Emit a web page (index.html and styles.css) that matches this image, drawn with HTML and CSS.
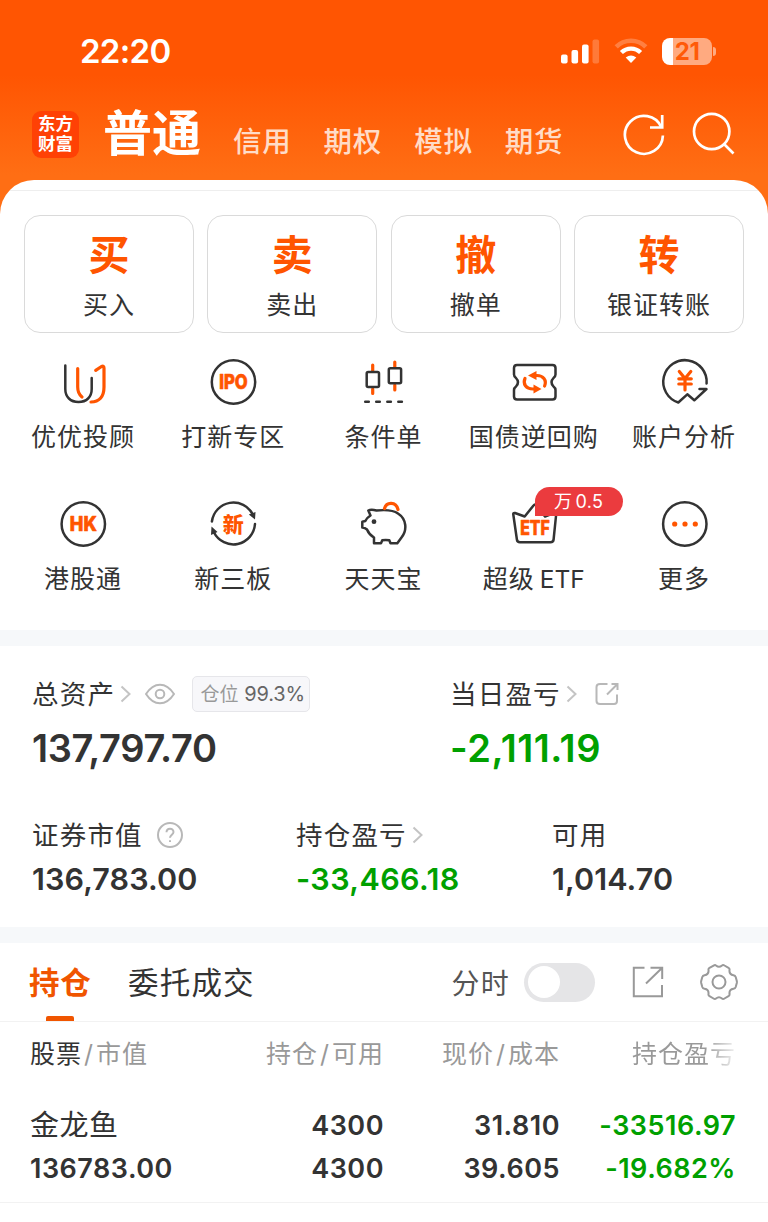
FILE: index.html
```html
<!DOCTYPE html>
<html lang="zh-CN">
<head>
    <meta charset="UTF-8">
    <meta name="viewport" content="width=device-width, initial-scale=1.0">
    <title>东方财富</title>
    <link rel="stylesheet" href="styles.css">
</head>
<body>
<!--HEADER-->
    <header class="header">
        <div class="status">
            <span class="time">22:20</span>
            <svg class="signal" width="39" height="25" viewBox="0 0 39 25" fill="#fff">
                <rect x="0" y="15.5" width="6.6" height="9" rx="2"/>
                <rect x="10.5" y="11" width="6.6" height="13.5" rx="2"/>
                <rect x="21" y="5.5" width="6.6" height="19" rx="2"/>
                <rect x="31.5" y="0.5" width="6.6" height="24" rx="2" opacity=".22"/>
            </svg>
            <svg class="wifi" width="34" height="26" viewBox="0 0 34 26" fill="none" stroke="#fff">
                <path d="M2.2 8.8A21 21 0 0 1 31.8 8.8" stroke-width="4.6" opacity=".25"/>
                <path d="M7.4 14.6A13.5 13.5 0 0 1 26.6 14.6" stroke-width="4.3"/>
                <path d="M17 25L11.7 19.5Q17 15.5 22.3 19.5Z" fill="#fff" stroke="none"/>
            </svg>
            <div class="battery"><span>21</span></div>
        </div>
        <nav class="nav">
            <div class="logo">东方<br>财富</div>
            <a class="nav-main">普通</a>
            <a class="nav-item">信用</a>
            <a class="nav-item">期权</a>
            <a class="nav-item">模拟</a>
            <a class="nav-item">期货</a>
            <svg class="nav-icons" width="114" height="46" viewBox="0 0 114 46" fill="none" stroke="#fff" stroke-width="2.7">
                <path d="M40.9 24.5A19 19 0 1 1 39.3 16.2"/>
                <path d="M40.2 4V16.5H28"/>
                <circle cx="89.7" cy="20.5" r="17.7"/>
                <path d="M101.5 32.5L111.5 42.5"/>
            </svg>
        </nav>
    </header>
<!--MENU-->
    <section class="sheet">
        <div class="actions">
            <div class="action"><b>买</b><span>买入</span></div>
            <div class="action"><b>卖</b><span>卖出</span></div>
            <div class="action"><b>撤</b><span>撤单</span></div>
            <div class="action"><b>转</b><span>银证转账</span></div>
        </div>
        <div class="menu">
            <div class="item">
                <svg class="icon" viewBox="0 0 46 46">
                    <path class="dark" d="M5.3 6.5V30C5.3 38 10.500 43 18.5 43S31.7 38 31.7 30V19"/>
                    <path class="orange" d="M17.7 9.5V28C17.7 33 19.5 36 22 38M35.7 11.3L41.5 7.5Q44 6.3 44 9V28C44 38 39 43 31 43"/>
                </svg>
                <span>优优投顾</span>
            </div>
            <div class="item">
                <svg class="icon" viewBox="0 0 46 46">
                    <circle class="dark" cx="23.500" cy="23" r="21.7"/>
                    <text class="word" x="23.5" y="30.3" textLength="28.5" lengthAdjust="spacingAndGlyphs">IPO</text>
                </svg>
                <span>打新专区</span>
            </div>
            <div class="item">
                <svg class="icon" viewBox="0 0 46 46">
                    <path class="orange" d="M12.7 6V12M12.7 30V34.5M34.8 3V8M34.8 26V31"/>
                    <rect class="dark" x="6.7" y="13.1" width="12.3" height="15" rx="1.5"/>
                    <rect class="dark" x="28.8" y="9.3" width="12.3" height="15" rx="1.5"/>
                    <path class="dark" d="M5.2 42.7H8.8M16.2 42.7H19.8M27.3 42.7H30.9M38.3 42.7H41.9"/>
                </svg>
                <span>条件单</span>
            </div>
            <div class="item">
                <svg class="icon" viewBox="0 0 46 46">
                    <path class="dark" d="M6 6H41.5Q44.5 6 44.5 9V15.5Q44.5 17.5 42.5 19Q38.5 23.2 42.5 27.5Q44.5 29 44.5 31V37.5Q44.5 40.5 41.5 40.5H6Q3 40.5 3 37.5V31Q3 29 5 27.5Q9 23.2 5 19Q3 17.5 3 15.5V9Q3 6 6 6Z"/>
                    <path class="orange" d="M24 16.5H26C32 16.5 36 21 33.6 27M24 30H22C15 30 11.5 25 14 19.5"/>
                    <path fill="#ff5500" d="M17 16.5L25.5 12V21ZM30.5 30L22.5 25.5V34.5Z"/>
                </svg>
                <span>国债逆回购</span>
            </div>
            <div class="item">
                <svg class="icon" viewBox="0 0 46 46">
                    <path class="dark" d="M45.6 24.5A21.7 21.7 0 1 0 17.3 43.5L26.3 35.3L33.3 41.3L45.5 30H38.5"/>
                    <path class="orange" d="M18.3 12.5L24 19.5L29.8 12.5M24 19.5V31M17.800 19.8H30.3M17.8 25H30.3"/>
                </svg>
                <span>账户分析</span>
            </div>
            <div class="item">
                <svg class="icon" viewBox="0 0 46 46">
                    <circle class="dark" cx="23.3" cy="23" r="21.7"/>
                    <text class="word" x="23.3" y="30.1" textLength="27" lengthAdjust="spacingAndGlyphs">HK</text>
                </svg>
                <span>港股通</span>
            </div>
            <div class="item">
                <svg class="icon" viewBox="0 0 46 46">
                    <path class="dark" d="M1.9 20.5A21.7 21.7 0 0 1 42.8 13.5M45 23A21.7 21.7 0 0 1 4 31.5"/>
                    <path d="M38.8 13.5L45.5 11L45 18.5ZM1 34L1.5 25.5L7.5 31Z" fill="#333"/>
                    <text class="word cjk" x="23.3" y="30.5">新</text>
                </svg>
                <span>新三板</span>
            </div>
            <div class="item">
                <svg class="icon" viewBox="0 0 46 46">
                    <path class="dark" d="M10.5 14.5L8.3 9.5Q11 8 16.5 9.5Q32 8 38 12.5C46.5 18 47.5 29 41.5 36.5L37.3 42.3H30.5L29.3 39.3Q25.5 38.5 22.3 39.3L21 42.3H14V36.5Q9 33.5 7 28.5Q5 26.7 2.3 26.5V20.7L5.3 20Q6.5 17 10.5 14.5Z"/>
                    <circle cx="14" cy="20.7" r="2.4" fill="#333"/>
                    <path class="orange" d="M24.5 7.500C26.5 .6 36 .6 38 8.5"/>
                </svg>
                <span>天天宝</span>
            </div>
            <div class="item">
                <svg class="icon" viewBox="0 0 46 46">
                    <path class="dark" d="M4 12L13.7 15.5L22.5 4.5Q24 2.5 25.5 4.5L34 15.5L43 12Q45.3 11.5 45.1 14L42.6 38.5Q42.3 41.2 39.5 41.2H9Q6.2 41.2 5.9 38.5L2.3 13.5Q2 11.5 4 12Z"/>
                    <text class="word" x="24" y="34.4" textLength="29.5" lengthAdjust="spacingAndGlyphs">ETF</text>
                </svg>
                <em class="badge">万 0.5</em>
                <span>超级 <i>ETF</i></span>
            </div>
            <div class="item">
                <svg class="icon" viewBox="0 0 46 46">
                    <circle class="dark" cx="23.8" cy="23" r="21.7"/>
                    <path d="M13.7 23h.01M24 23h.01M34.3 23h.01" stroke="#ff5500" stroke-width="5.2" stroke-linecap="round"/>
                </svg>
                <span>更多</span>
            </div>
        </div>
    </section>
<!--ASSETS-->
    <section class="assets">
        <div class="row total">
            <div class="cell">
                <div class="label"><span>总资产</span>
                    <svg class="arrow" width="11" height="18" viewBox="0 0 11 18"><path d="M1.5 1.5L9.5 9L1.5 16.5"/></svg>
                    <svg class="eye" width="30" height="22" viewBox="0 0 30 22"><path d="M1 11Q7 1.7 15 1.7T29 11Q23 20.3 15 20.3T1 11Z"/><circle cx="15" cy="11" r="4.3"/></svg>
                    <div class="tag">仓位 <i>99.3%</i></div>
                </div>
                <div class="value">137,797.70</div>
            </div>
            <div class="cell">
                <div class="label"><span>当日盈亏</span>
                    <svg class="arrow" width="11" height="18" viewBox="0 0 11 18"><path d="M1.5 1.5L9.5 9L1.5 16.5"/></svg>
                    <svg class="share" width="24" height="24" viewBox="0 0 24 24"><path d="M12.5 2H5Q1.5 2 1.5 5V19Q1.5 22 5 22H19Q22 22 22 19V12.5M16.5 2H22.5V8M22 2.5L12 12.5"/></svg>
                </div>
                <div class="value green">-2,111.19</div>
            </div>
        </div>
        <div class="row detail">
            <div class="cell">
                <div class="label"><span>证券市值</span>
                    <svg class="help" width="26" height="26" viewBox="0 0 26 26"><circle cx="13" cy="13" r="12"/><path d="M9.5 10.3C9.5 5.5 16.5 5.5 16.5 10C16.5 12.5 13 13 13 15.8M13 18.3V20"/></svg>
                </div>
                <div class="value">136,783.00</div>
            </div>
            <div class="cell">
                <div class="label"><span>持仓盈亏</span>
                    <svg class="arrow" width="11" height="18" viewBox="0 0 11 18"><path d="M1.5 1.5L9.5 9L1.5 16.5"/></svg>
                </div>
                <div class="value green">-33,466.18</div>
            </div>
            <div class="cell">
                <div class="label"><span>可用</span></div>
                <div class="value">1,014.70</div>
            </div>
        </div>
    </section>
<!--POSITIONS-->
    <section class="positions">
        <div class="tabs">
            <a class="tab active">持仓</a>
            <a class="tab">委托成交</a>
            <span class="time-share">分时</span>
            <div class="toggle"></div>
            <svg class="export" width="32" height="32" viewBox="0 0 32 32"><path d="M12.5 1.8H1.8V30.2H30V19M18.5 1.8H30.2V13M30 2L14 17.5"/></svg>
            <svg class="gear" width="38" height="38" viewBox="0 0 38 38"><path d="M14 2.5Q15 1.5 16 2.5Q19 5 22 2.5Q23 1.5 24.5 2.5L28.5 4.8Q29.8 5.5 29.5 7Q29 11.5 33.5 12.2Q35.2 12.5 35.7 14L36.800 18Q37 19 36.8 20L35.7 24Q35.2 25.5 33.5 25.8Q29 26.5 29.5 31Q29.8 32.500 28.5 33.2L24.5 35.5Q23 36.5 22 35.5Q19 33 16 35.5Q15 36.5 13.5 35.5L9.500 33.2Q8.2 32.5 8.5 31Q9 26.5 4.5 25.8Q2.8 25.5 2.3 24L1.2 20Q1 19 1.2 18L2.3 14Q2.8 12.5 4.5 12.2Q9 11.5 8.500 7Q8.2 5.5 9.5 4.8Z"/><circle cx="19" cy="19" r="6.5"/></svg>
        </div>
        <div class="grid head">
            <div><b>股票</b><i>/</i>市值</div>
            <div>持仓<i>/</i>可用</div>
            <div>现价<i>/</i>成本</div>
            <div class="fade">持仓盈亏</div>
        </div>
        <div class="grid stock">
            <div class="name">金龙鱼</div>
            <div>4300</div>
            <div>31.810</div>
            <div class="green">-33516.97</div>
            <div>136783.00</div>
            <div>4300</div>
            <div>39.605</div>
            <div class="green">-19.682%</div>
        </div>
    </section>
</body>
</html>
```
FILE: styles.css
```css
*{
    box-sizing: border-box;
}
body{
    margin: 0;
    width: 768px;
    height: 1222px;
    overflow: hidden;
    background-color: white;
    color: #333;
    font-family: Inter, "Noto Sans CJK SC", sans-serif;
}
svg{
    display: block;
    flex: none;
}
i{
    font-style: normal;
}
.header{
    height: 220px;
    background: linear-gradient(#ff5502 0, #ff5502 75px, #ff6e14 175px);
    color: white;
}
.status{
    display: flex;
    align-items: center;
    height: 102px;
    padding: 0 56px 0 80px;
}
.time{
    margin-right: auto;
    font-size: 33px;
    font-weight: 600;
    letter-spacing: -.7px;
}
.wifi{
    margin: 0 14px 0 14px;
}
.battery{
    position: relative;
    width: 50px;
    height: 27px;
    border-radius: 8px;
    background: linear-gradient(90deg, #fff 11px, #ffaa80 11px);
    color: #ff5a08;
    font-size: 24px;
    font-weight: 700;
    letter-spacing: -.5px;
    line-height: 28px;
    text-align: center;
}
.battery::after{
    content: "";
    position: absolute;
    right: -4px;
    top: 9px;
    width: 3px;
    height: 9px;
    border-radius: 0 4px 4px 0;
    background-color: #ffaa80;
}
.nav{
    display: flex;
    align-items: center;
    height: 64px;
    padding-left: 32px;
}
.logo{
    width: 47px;
    height: 47px;
    border-radius: 9px;
    background-color: #ff4105;
    font-size: 17.5px;
    font-weight: 700;
    line-height: 20px;
    text-align: center;
    padding-top: 3px;
}
.nav-main{
    width: 129px;
    padding-left: 24px;
    font-size: 49px;
    font-weight: 700;
    line-height: 60px;
    white-space: nowrap;
}
.nav-item{
    width: 90.6px;
    padding-left: 25px;
    padding-top: 16px;
    font-size: 28.5px;
    font-weight: 500;
    letter-spacing: .7px;
    line-height: 40px;
    white-space: nowrap;
    color: #ffdcc8;
}
.nav-icons{
    margin-left: 52px;
}
.sheet{
    height: 450px;
    margin-top: -40px;
    border-radius: 34px 34px 0 0;
    background: linear-gradient(#fff 10px, #eee 10px, #eee 11px, #fff 11px);
}
.actions{
    display: grid;
    grid-template-columns: repeat(4, 1fr);
    gap: 13.3px;
    padding: 35px 24px 0;
}
.action{
    display: flex;
    flex-direction: column;
    align-items: center;
    height: 118px;
    padding-top: 15px;
    border: 1.5px solid #dadada;
    border-radius: 16px;
    background-color: #fff;
}
.action b{
    color: #ff5500;
    font-size: 41px;
    font-weight: 700;
    line-height: 48px;
}
.action span{
    margin-top: 9px;
    font-size: 25px;
    letter-spacing: 1px;
    line-height: 34px;
}
.menu{
    display: grid;
    grid-template-columns: repeat(5, 1fr);
    padding: 26px 9px 0 8px;
}
.item{
    position: relative;
    display: flex;
    flex-direction: column;
    align-items: center;
    height: 142px;
    font-size: 25px;
    letter-spacing: 1px;
    line-height: 36px;
    white-space: nowrap;
}
.item span{
    margin-top: 14px;
}
.item i{
    margin-left: -3px;
    font-size: 24.5px;
    letter-spacing: 0;
}
.icon{
    width: 46px;
    height: 46px;
    overflow: visible;
}
.dark, .orange{
    fill: none;
    stroke: #333;
    stroke-width: 2.5;
    stroke-linecap: round;
    stroke-linejoin: round;
}
.orange{
    stroke: #ff5500;
    stroke-width: 3.2;
}
.word{
    fill: #ff5500;
    stroke: #ff5500;
    stroke-width: .7;
    stroke-linejoin: round;
    font-size: 20px;
    font-weight: 800;
    letter-spacing: 0;
    text-anchor: middle;
}
.cjk{
    stroke: none;
    font-size: 21px;
    font-weight: 900;
}
.badge{
    position: absolute;
    left: 76px;
    top: -14px;
    width: 88px;
    height: 29px;
    border-radius: 15px 15px 15px 0;
    background-color: #eb3b3e;
    color: #fff;
    font-size: 18px;
    font-style: normal;
    letter-spacing: .3px;
    word-spacing: -2px;
    line-height: 29px;
    text-align: center;
}
.assets{
    height: 313px;
    border-top: 16px solid #f6f8fa;
    border-bottom: 16px solid #f6f8fa;
}
.row{
    display: grid;
    padding-left: 32px;
}
.total{
    grid-template-columns: 418px 1fr;
    padding-top: 28px;
    height: 169px;
}
.detail{
    grid-template-columns: 264px 256px 1fr;
}
.label{
    display: flex;
    align-items: center;
    height: 40px;
    font-size: 26.5px;
    letter-spacing: 1.2px;
    white-space: nowrap;
}
.label span{
    margin-top: -3px;
}
.label svg, .export, .gear{
    fill: none;
    stroke: #b8b8b8;
    stroke-width: 2;
}
.label .arrow{
    margin-left: 5px;
    stroke: #c4c4c4;
}
.label .eye{
    margin-left: 14px;
}
.label .share{
    margin-left: 18px;
}
.label .help{
    margin-left: 14px;
}
.tag{
    width: 118px;
    height: 36px;
    margin-left: 17px;
    padding-left: 3px;
    border: 1.5px solid #e6e6ea;
    border-radius: 5px;
    background-color: #f7f7fa;
    color: #999;
    font-size: 19px;
    letter-spacing: .2px;
    line-height: 34px;
    text-align: center;
}
.tag i{
    color: #666;
    font-size: 20px;
    letter-spacing: -.2px;
}
.value{
    font-size: 38px;
    font-weight: 600;
    letter-spacing: -.4px;
    line-height: 48px;
    margin-top: 10px;
}
.total .green{
    letter-spacing: .5px;
}
.detail .value{
    font-size: 30.5px;
    letter-spacing: .1px;
    line-height: 40px;
    margin-top: 4px;
}
.detail .green{
    letter-spacing: .4px;
}
.green{
    color: #00a000;
}
.tabs{
    display: flex;
    align-items: center;
    height: 79px;
    padding: 0 30px 0 29px;
    border-bottom: 1px solid #f2f2f2;
    font-size: 30.5px;
    letter-spacing: 1.2px;
    white-space: nowrap;
}
.tab{
    position: relative;
    padding-top: 1px;
    line-height: 77px;
}
.active{
    width: 99px;
    color: #f05500;
    font-weight: 700;
    letter-spacing: .8px;
}
.active::after{
    content: "";
    position: absolute;
    left: 17px;
    bottom: 0;
    width: 28px;
    height: 5px;
    border-radius: 2px 2px 0 0;
    background-color: #f05500;
}
.time-share{
    margin-left: auto;
    color: #555;
    font-size: 28px;
}
.toggle{
    width: 71px;
    height: 39px;
    margin-left: 14px;
    padding: 3.5px 4px;
    border-radius: 20px;
    background-color: #e5e5e7;
}
.toggle::before{
    content: "";
    display: block;
    width: 32px;
    height: 32px;
    border-radius: 50%;
    background-color: #fff;
}
.export{
    margin-left: 37px;
}
.export, .gear{
    stroke: #999;
}
.gear{
    margin-left: 36px;
}
.grid{
    display: grid;
    grid-template-columns: 177px 177px 176px 176px;
    padding-left: 30px;
    text-align: right;
    white-space: nowrap;
}
.grid div:nth-child(4n+1){
    text-align: left;
}
.head{
    height: 66px;
    line-height: 65px;
    color: #999;
    font-size: 25px;
    letter-spacing: 1px;
}
.head b{
    color: #333;
    font-weight: 400;
}
.head i{
    padding: 0 2px;
}
.fade{
    color: transparent;
    background: linear-gradient(90deg, #999 145px, #eee 175px);
    -webkit-background-clip: text;
    background-clip: text;
}
.stock{
    height: 115px;
    grid-template-rows: 43px 43px;
    padding-top: 16px;
    border-bottom: 1px solid #f2f2f2;
    font-size: 27px;
    font-weight: 600;
    letter-spacing: .5px;
    line-height: 43px;
}
.name{
    font-size: 29px;
    font-weight: 400;
}
```
